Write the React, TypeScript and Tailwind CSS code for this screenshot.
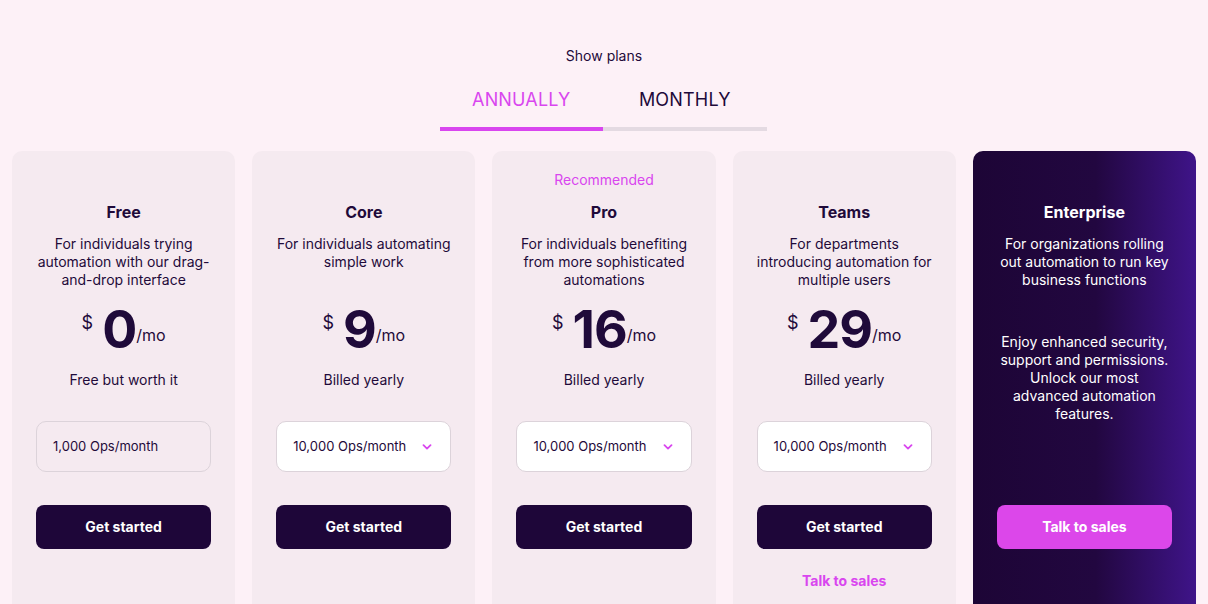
import React, { useState } from 'react';

type Plan = {
  name: string;
  description: string;
  price: string;
  note: string;
  ops: string;
  selectable: boolean;
  recommended?: boolean;
  salesLink?: boolean;
};

const plans: Plan[] = [
  {
    name: 'Free',
    description: 'For individuals trying automation with our drag-and-drop interface',
    price: '0',
    note: 'Free but worth it',
    ops: '1,000 Ops/month',
    selectable: false,
  },
  {
    name: 'Core',
    description: 'For individuals automating simple work',
    price: '9',
    note: 'Billed yearly',
    ops: '10,000 Ops/month',
    selectable: true,
  },
  {
    name: 'Pro',
    description: 'For individuals benefiting from more sophisticated automations',
    price: '16',
    note: 'Billed yearly',
    ops: '10,000 Ops/month',
    selectable: true,
    recommended: true,
  },
  {
    name: 'Teams',
    description: 'For departments introducing automation for multiple users',
    price: '29',
    note: 'Billed yearly',
    ops: '10,000 Ops/month',
    selectable: true,
    salesLink: true,
  },
];

const Chevron = () => (
  <svg width="10" height="6" viewBox="0 0 10 6" fill="none">
    <path d="M1.5 1.2 5 4.6 8.5 1.2" stroke="#d946ef" strokeWidth="1.8" strokeLinecap="round" strokeLinejoin="round" />
  </svg>
);

const PlanCard: React.FC<{ plan: Plan }> = ({ plan }) => (
  <div className="h-[480px] rounded-[10px] bg-[#f5eaf0] px-6 pt-5 text-center text-[#1f0a3a]">
    <div className="h-[18px] text-sm leading-[18px] text-[#d946ef]">{plan.recommended ? 'Recommended' : ''}</div>
    <h3 className="mt-[11px] text-base font-bold leading-6">{plan.name}</h3>
    <p className="mt-[11px] h-[54px] text-sm leading-[18px]">{plan.description}</p>

    <div className="mt-[11px] flex h-[60px] items-start justify-center">
      <span className="mr-[9px] mt-[14px] text-lg leading-[18px]">$</span>
      <span className="text-[52px] font-bold leading-[60px] tracking-[-0.02em]">{plan.price}</span>
      <span className="mt-[25px] text-base leading-5">/mo</span>
    </div>
    <div className="mt-[11px] text-sm leading-[18px]">{plan.note}</div>

    {plan.selectable ? (
      <button className="mt-[32px] flex h-[51px] w-full items-center justify-between rounded-[10px] border border-[#dcd3da] bg-white pl-4 pr-[18px] text-[13px] text-[#1f0a3a]">
        <span>{plan.ops}</span>
        <Chevron />
      </button>
    ) : (
      <div className="mt-[32px] flex h-[51px] w-full items-center rounded-[10px] border border-[#dcd3da] pl-4 text-left text-[13px]">
        {plan.ops}
      </div>
    )}

    <button className="mt-[33px] h-[44px] w-full rounded-lg bg-[#1e0639] text-sm font-bold text-white">Get started</button>
    {plan.salesLink && (
      <div className="mt-[23px] text-sm font-bold leading-[18px] text-[#d946ef]">Talk to sales</div>
    )}
  </div>
);

const EnterpriseCard = () => (
  <div className="h-[480px] rounded-[10px] bg-[linear-gradient(90deg,#1d0536_0%,#220740_55%,#3f1489_100%)] px-6 pt-5 text-center text-white">
    <div className="h-[18px]" />
    <h3 className="mt-[11px] text-base font-bold leading-6">Enterprise</h3>
    <p className="mt-[11px] h-[54px] text-sm leading-[18px]">
      For organizations rolling out automation to run key business functions
    </p>
    <p className="mt-[44px] h-[90px] text-sm leading-[18px]">
      Enjoy enhanced security, support and permissions. Unlock our most advanced automation features.
    </p>
    <button className="mt-[82px] h-[44px] w-full rounded-lg bg-[#dc47ea] text-sm font-bold text-white">Talk to sales</button>
  </div>
);

const App: React.FC = () => {
  const [billing, setBilling] = useState<'annually' | 'monthly'>('annually');

  return (
    <div className="min-h-screen bg-[#fdf1f7] pt-[46px] font-['Inter','Noto_Sans',sans-serif] text-[#1f0a3a]">
      <div className="text-center text-sm leading-5">Show plans</div>

      <div className="mx-auto mt-[22px] flex w-[327px] -translate-x-px">
        {(['annually', 'monthly'] as const).map((b) => (
          <button
            key={b}
            onClick={() => setBilling(b)}
            className={
              'flex-1 pb-[15px] text-[18px] leading-6 tracking-[0.01em] border-b-4 ' +
              (billing === b ? 'border-[#d946ef] text-[#d946ef]' : 'border-[#e4dae2] text-[#1f0a3a]')
            }
          >
            {b.toUpperCase()}
          </button>
        ))}
      </div>

      <div className="mt-[20px] grid grid-cols-5 gap-[17px] px-3">
        {plans.map((p) => (
          <PlanCard key={p.name} plan={p} />
        ))}
        <EnterpriseCard />
      </div>
    </div>
  );
};

export default App;
